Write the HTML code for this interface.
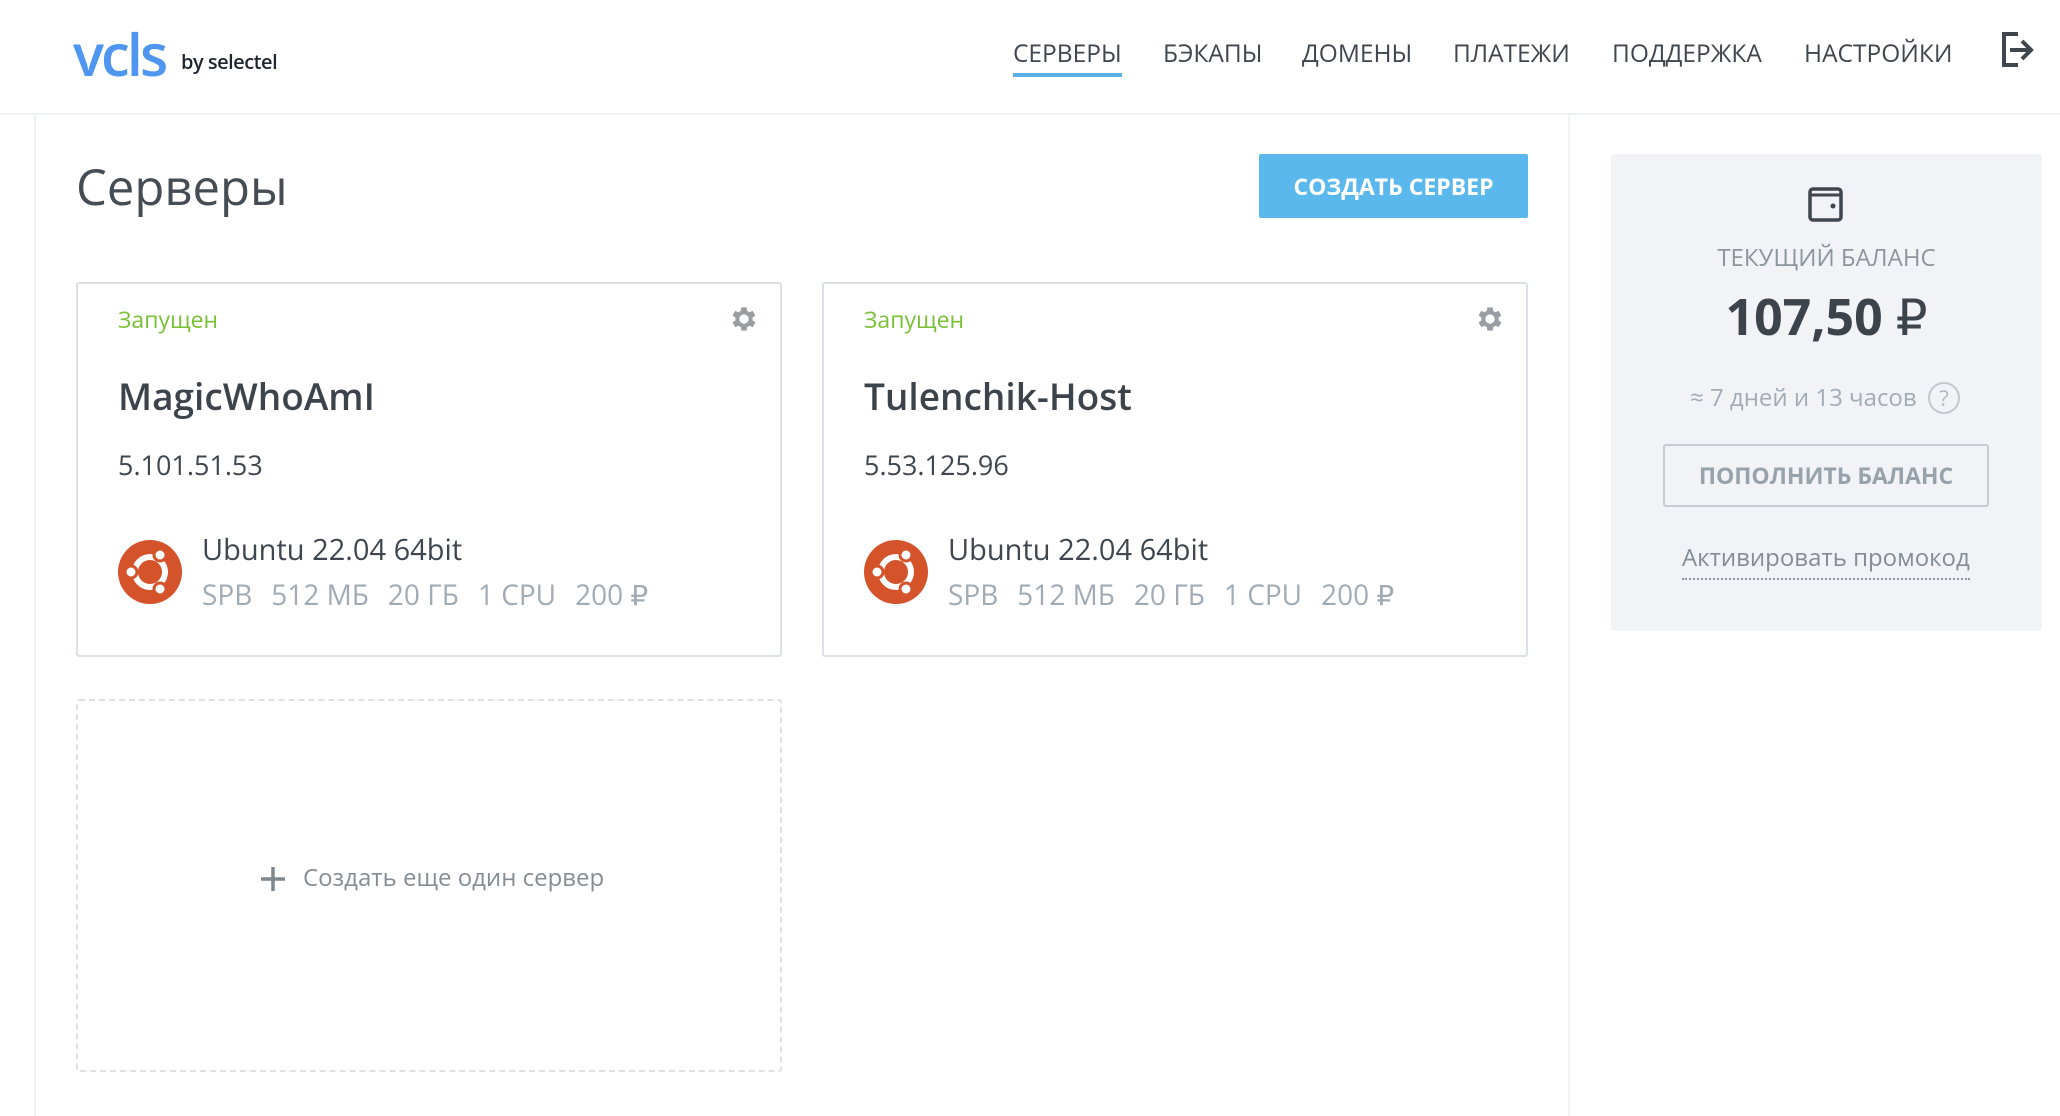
<!DOCTYPE html>
<html><head><meta charset="utf-8"><style>
*{margin:0;padding:0;box-sizing:border-box}
body{width:2060px;height:1116px;background:#fff;position:relative;overflow:hidden;font-family:"Open Sans","Liberation Sans","DejaVu Sans",sans-serif;color:#3f464e}
.a{position:absolute;white-space:nowrap}
.nav{font-size:24.5px;color:#3f464e;top:37px}
.card{position:absolute;border:2px solid #dde0e4;border-radius:3px;background:#fff}
.st{font-size:23px;color:#79c134;left:40px;top:19px;position:absolute}
.nm{font-size:37px;font-weight:600;left:40px;top:86px;position:absolute;color:#3c434b}
.ip{font-size:27px;left:40px;top:162px;position:absolute}
.os{font-size:29px;left:124px;top:246px;position:absolute}
.sp{font-size:28px;left:124px;top:292px;position:absolute;color:#a1abb5}
.sp span{margin-right:19px}
.ub{position:absolute;left:40px;top:256px}
.gear{position:absolute;right:20px;top:19px}
</style></head><body>
<div class="a" style="left:73px;top:14px;font-size:58px;color:#4e96f0;font-weight:600;letter-spacing:-3px">vcls</div>
<div class="a" style="left:181px;top:48px;font-size:20px;color:#1f2630;font-weight:600;letter-spacing:-0.5px">by selectel</div>
<div class="a nav" style="left:1013px">СЕРВЕРЫ</div>
<div class="a" style="left:1013px;top:73px;width:109px;height:4px;background:#5ab1ea"></div>
<div class="a nav" style="left:1163px">БЭКАПЫ</div>
<div class="a nav" style="left:1302px">ДОМЕНЫ</div>
<div class="a nav" style="left:1453px">ПЛАТЕЖИ</div>
<div class="a nav" style="left:1612px">ПОДДЕРЖКА</div>
<div class="a nav" style="left:1804px">НАСТРОЙКИ</div>
<svg class="a" style="left:1998px;top:30px" width="40" height="40" viewBox="0 0 40 40"><path d="M20 4H6v31h14" fill="none" stroke="#3f464e" stroke-width="4"/><path d="M12 20h20M24 11l9 9-9 9" fill="none" stroke="#3f464e" stroke-width="4"/></svg>
<div class="a" style="left:0;top:113px;width:2060px;height:2px;background:#f1f2f4"></div>
<div class="a" style="left:34px;top:115px;width:2px;height:1001px;background:#f1f2f4"></div>
<div class="a" style="left:1568px;top:115px;width:2px;height:1001px;background:#f1f2f4"></div>
<div class="a" style="left:76px;top:154px;font-size:49px;font-weight:500;color:#454c54">Серверы</div>
<div class="a" style="left:1259px;top:154px;width:269px;height:64px;background:#5bb8ec;border-radius:2px;color:#fff;font-size:23px;font-weight:700;text-align:center;line-height:64px">СОЗДАТЬ СЕРВЕР</div>

<div class="card" style="left:76px;top:282px;width:706px;height:375px">
<div class="st">Запущен</div>
<svg class="gear" width="32" height="32" viewBox="0 0 24 24"><path fill="#9a9ea3" d="M19.4 13a7.5 7.5 0 000-2l2.1-1.6-2-3.5-2.5 1a7.6 7.6 0 00-1.7-1L15 3.3h-4l-.4 2.6a7.6 7.6 0 00-1.7 1l-2.5-1-2 3.5L6.6 11a7.5 7.5 0 000 2l-2.2 1.6 2 3.5 2.5-1a7.6 7.6 0 001.7 1l.4 2.6h4l.4-2.6a7.6 7.6 0 001.7-1l2.5 1 2-3.5zM13 15.5a3.5 3.5 0 110-7 3.5 3.5 0 010 7z" transform="translate(-1 0)"/></svg>
<div class="nm">MagicWhoAmI</div>
<div class="ip">5.101.51.53</div>
<svg class="ub" width="64" height="64" viewBox="0 0 64 64"><circle cx="32" cy="32" r="32" fill="#d4532a"/><circle cx="32" cy="32" r="15" fill="none" stroke="#fff" stroke-width="6"/><circle cx="13" cy="32" r="6" fill="#fff" stroke="#d4532a" stroke-width="3"/><circle cx="42" cy="15" r="6" fill="#fff" stroke="#d4532a" stroke-width="3"/><circle cx="42" cy="49" r="6" fill="#fff" stroke="#d4532a" stroke-width="3"/></svg>
<div class="os">Ubuntu 22.04 64bit</div>
<div class="sp"><span>SPB</span><span>512 МБ</span><span>20 ГБ</span><span>1 CPU</span><span>200 ₽</span></div>
</div>

<div class="card" style="left:822px;top:282px;width:706px;height:375px">
<div class="st">Запущен</div>
<svg class="gear" width="32" height="32" viewBox="0 0 24 24"><path fill="#9a9ea3" d="M19.4 13a7.5 7.5 0 000-2l2.1-1.6-2-3.5-2.5 1a7.6 7.6 0 00-1.7-1L15 3.3h-4l-.4 2.6a7.6 7.6 0 00-1.7 1l-2.5-1-2 3.5L6.6 11a7.5 7.5 0 000 2l-2.2 1.6 2 3.5 2.5-1a7.6 7.6 0 001.7 1l.4 2.6h4l.4-2.6a7.6 7.6 0 001.7-1l2.5 1 2-3.5zM13 15.5a3.5 3.5 0 110-7 3.5 3.5 0 010 7z" transform="translate(-1 0)"/></svg>
<div class="nm">Tulenchik-Host</div>
<div class="ip">5.53.125.96</div>
<svg class="ub" width="64" height="64" viewBox="0 0 64 64"><circle cx="32" cy="32" r="32" fill="#d4532a"/><circle cx="32" cy="32" r="15" fill="none" stroke="#fff" stroke-width="6"/><circle cx="13" cy="32" r="6" fill="#fff" stroke="#d4532a" stroke-width="3"/><circle cx="42" cy="15" r="6" fill="#fff" stroke="#d4532a" stroke-width="3"/><circle cx="42" cy="49" r="6" fill="#fff" stroke="#d4532a" stroke-width="3"/></svg>
<div class="os">Ubuntu 22.04 64bit</div>
<div class="sp"><span>SPB</span><span>512 МБ</span><span>20 ГБ</span><span>1 CPU</span><span>200 ₽</span></div>
</div>

<div class="a" style="left:76px;top:699px;width:706px;height:373px;border:2px dashed #dde0e4;border-radius:3px"></div>
<svg class="a" style="left:260px;top:866px" width="26" height="26" viewBox="0 0 26 26"><path d="M13 1v24M1 13h24" stroke="#7f878f" stroke-width="3.5"/></svg>
<div class="a" style="left:303px;top:861px;font-size:24px;color:#848c94">Создать еще один сервер</div>

<div class="a" style="left:1611px;top:154px;width:431px;height:477px;background:#f1f3f7;border-radius:3px"></div>
<svg class="a" style="left:1808px;top:186px" width="36" height="36" viewBox="0 0 36 36"><rect x="2" y="3" width="31" height="31" rx="3" fill="none" stroke="#3f464e" stroke-width="3.5"/><path d="M2 9h31" stroke="#3f464e" stroke-width="3"/><circle cx="25" cy="20" r="2.5" fill="#3f464e"/></svg>
<div class="a" style="left:1611px;width:431px;text-align:center;top:241px;font-size:24px;color:#8d959c">ТЕКУЩИЙ БАЛАНС</div>
<div class="a" style="left:1611px;width:431px;text-align:center;top:282px;font-size:50px;font-weight:700;color:#3c434b">107,50 <span style="font-weight:400">₽</span></div>
<div class="a" style="left:1690px;top:381px;font-size:24px;color:#a2abb3">≈ 7 дней и 13 часов</div>
<div class="a" style="left:1928px;top:382px;width:32px;height:32px;border:2px solid #c4c8cc;border-radius:50%;color:#b4b9be;font-size:22px;text-align:center;line-height:28px">?</div>
<div class="a" style="left:1663px;top:444px;width:326px;height:63px;border:2px solid #c8ccd0;border-radius:3px;text-align:center;line-height:59px;font-size:23px;font-weight:700;color:#98a2ab">ПОПОЛНИТЬ БАЛАНС</div>
<div class="a" style="left:1682px;top:541px;font-size:24px;color:#848c94;border-bottom:2px dotted #8d959c;padding-bottom:4px">Активировать промокод</div>
</body></html>
